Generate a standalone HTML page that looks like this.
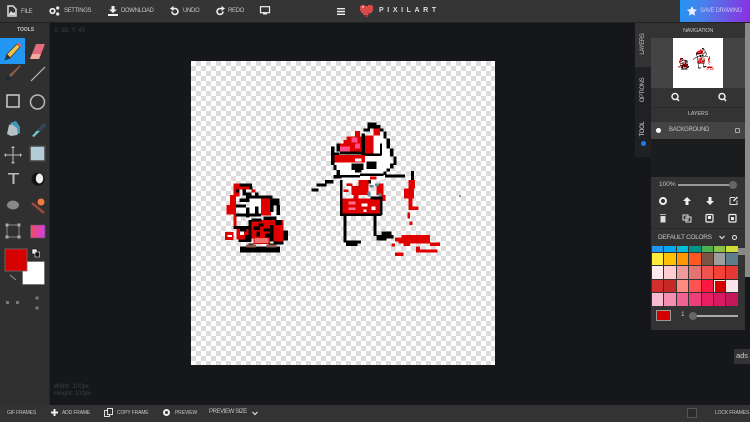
<!DOCTYPE html>
<html><head><meta charset="utf-8"><style>
html,body{margin:0;padding:0;width:750px;height:422px;overflow:hidden;background:#15171a}
body{position:relative;font-family:"Liberation Sans",sans-serif}
div{position:absolute;box-sizing:border-box}
.t{color:#c4c4c4;font-size:6px;line-height:8px;white-space:nowrap;text-transform:uppercase;letter-spacing:-.35px}
.b{font-size:5px;letter-spacing:-.15px}
svg{position:absolute;overflow:visible}
.c{background-color:#fff;background-image:conic-gradient(#dcdcdc 25%,#fff 0 50%,#dcdcdc 0 75%,#fff 0);background-size:10px 10px}
.p{width:12.4px;height:13.2px;border:.5px solid #333}
</style></head><body>
<div style="left:0;top:0;width:750px;height:23px;background:#353535;border-bottom:1px solid #222"></div>
<div style="left:0;top:23px;width:50px;height:382px;background:#303030;border-right:1px solid #252525"></div>
<div style="left:0;top:405px;width:750px;height:17px;background:#333"></div>

<!-- top -->
<svg style="left:7px;top:5px" width="10" height="12" viewBox="0 0 10 12"><path d="M1 1h5l3 3v7H1z" fill="none" stroke="#ddd" stroke-width="1.5"/><path d="M2 9l2-3 2 2 2-1v3H2z" fill="#ddd"/></svg>
<div class="t" style="left:21px;top:8px">File</div>
<svg style="left:49px;top:6px" width="11" height="10" viewBox="0 0 11 10"><circle cx="3.5" cy="5" r="2.3" fill="none" stroke="#eee" stroke-width="1.7"/><circle cx="8.7" cy="2" r="1.6" fill="#eee"/><circle cx="8.7" cy="8" r="1.6" fill="#eee"/></svg>
<div class="t" style="left:64px;top:7px">Settings</div>
<svg style="left:108px;top:6px" width="10" height="10" viewBox="0 0 10 10"><path d="M3.5 0h3v3.5H9L5 7 1 3.5h2.5zM0 8h10v2H0z" fill="#eee"/></svg>
<div class="t" style="left:121px;top:7px">Download</div>
<svg style="left:170px;top:6px" width="9" height="10" viewBox="0 0 9 10"><path d="M2 2.5h3a3 3 0 1 1-3 3" fill="none" stroke="#eee" stroke-width="1.6"/><path d="M3.5 0v5L0 2.5z" fill="#eee"/></svg>
<div class="t" style="left:183px;top:7px">Undo</div>
<svg style="left:216px;top:6px" width="9" height="10" viewBox="0 0 9 10"><path d="M7 2.5H4a3 3 0 1 0 3 3" fill="none" stroke="#eee" stroke-width="1.6"/><path d="M5.5 0v5L9 2.5z" fill="#eee"/></svg>
<div class="t" style="left:228px;top:7px">Redo</div>
<svg style="left:260px;top:6px" width="10" height="10" viewBox="0 0 10 10"><rect x=".5" y=".7" width="9" height="6" fill="none" stroke="#eee" stroke-width="1.2"/><rect x="3" y="7" width="4" height="1.5" fill="#eee"/></svg>
<svg style="left:337px;top:8px" width="8" height="7" viewBox="0 0 8 7"><path d="M0 0h8v1.4H0zM0 2.8h8v1.4H0zM0 5.600h8V7H0z" fill="#eee"/></svg>
<svg style="left:360px;top:5px" width="13" height="13" viewBox="0 0 13 13"><path d="M1 0h4v1h3V0h4v1h1v5h-1v2h-2v2H8v2H5v-2H3V8H1V6H0V1h1z" fill="#d94a4a"/><path d="M2 1h2v2H2z" fill="#f7a0a0"/><path d="M8 8h2v2H8zM5 10h3v2H5z" fill="#a92b2b"/></svg>
<div style="left:379px;top:6px;color:#ddd;font-size:7px;font-weight:bold;letter-spacing:3.6px;line-height:10px;white-space:nowrap">PIXILART</div>
<div style="left:680px;top:0;width:70px;height:22px;background:linear-gradient(100deg,#2196f3,#4b7ee8 35%,#8e2de2)"></div>
<svg style="left:687px;top:6px" width="10" height="10" viewBox="0 0 10 10"><path d="M5 0l1.500 3.300 3.500.4-2.600 2.400.7 3.600L5 8 1.900 9.700l.7-3.600L0 3.700l3.500-.4z" fill="#eef"/></svg>
<div class="t" style="left:700px;top:7px;color:#c9c4f5">Save Drawing</div>

<!-- coords -->
<div style="left:54px;top:27px;color:#3d3f42;font-size:6px;line-height:8px">X: 89, Y: 45</div>
<div style="left:54px;top:384px;color:#3d3f42;font-size:6px;line-height:7px">Width: 100px<br>Height: 100px</div>

<!-- left tools -->
<div class="t" style="left:17px;top:26px;font-size:5px;font-weight:bold;letter-spacing:0">Tools</div>
<div style="left:0;top:38px;width:25px;height:26px;background:#2196f3"></div>
<svg style="left:0;top:38px" width="50" height="290" viewBox="0 0 50 290">
<!-- pencil --><path d="M5 22l2-6L17 6l3 3L10 20z" fill="#f6c244" stroke="#222" stroke-width=".6"/><path d="M17 6l1.500-1.500 3 3L20 9z" fill="#e8655f"/><path d="M5 22l2-6 4 4z" fill="#333"/>
<!-- eraser --><path d="M30 21l6-15h9l-6 15z" fill="#e46a7c"/><path d="M30 21l2-5h9l-2 5z" fill="#f3a9a0"/>
<!-- brush --><path d="M9 37l11-10 1 1-10 11z" fill="#8a5a44"/><path d="M5 43c1-3 3-5 5-4s0 4-5 4z" fill="#1b2a38"/>
<path d="M31 43l14-14" stroke="#bbb" stroke-width="1.200"/>
<rect x="7" y="57" width="12" height="12" fill="none" stroke="#ccc" stroke-width="1.500"/>
<circle cx="37.500" cy="64" r="7" fill="none" stroke="#bbb" stroke-width="1.500"/>
<!-- bucket --><path d="M7 96l2-9 6-2 3 4 1 5-2 3-6 1z" fill="#b6c1c7"/><path d="M10 85l6-2 4 6 0 6-2 1-1-6z" fill="#3f97b8"/>
<!-- eyedropper --><path d="M32 98l10-11 2 2-10 10z" fill="#6ccbd3"/><path d="M37 93l5-7 3-1 1 3-5 5z" fill="#32475a"/>
<!-- move --><path d="M13 110v14M6 117h14" stroke="#bbb" stroke-width="1"/><path d="M13 108l-2 2h4zM13 126l-2-2h4zM4 117l2-2v4zM22 117l-2-2v4z" fill="#bbb"/>
<rect x="30" y="108" width="15" height="15" fill="#b3cdd6" stroke="#444" stroke-width="1.500"/>
<!-- text --><path d="M8 135h11v1.500h-4.500V146h-2v-9.500H8z" fill="#bbb"/>
<circle cx="38" cy="141" r="6.500" fill="#111"/><ellipse cx="39.500" cy="140.500" rx="3.700" ry="5" fill="#eee"/>
<!-- stamp blob --><ellipse cx="13" cy="167" rx="6" ry="4.500" fill="#888"/>
<path d="M32 165l12 10" stroke="#9a4a3c" stroke-width="2.500"/><circle cx="41" cy="164" r="3.500" fill="#f07b3f"/>
<!-- select --><rect x="7" y="187" width="12" height="12" fill="none" stroke="#888" stroke-width="1"/><g fill="#aaa"><rect x="5.500" y="185.500" width="3" height="3"/><rect x="17.500" y="185.500" width="3" height="3"/><rect x="5.500" y="197.500" width="3" height="3"/><rect x="17.500" y="197.500" width="3" height="3"/></g>
<defs><linearGradient id="g" x1="0" x2="1"><stop offset="0" stop-color="#ef4f5c"/><stop offset="1" stop-color="#d23ee8"/></linearGradient></defs>
<rect x="30.500" y="187" width="14.500" height="13" fill="url(#g)" stroke="#555" stroke-width=".6"/>
<!-- colors -->
<rect x="22.500" y="223.500" width="22" height="23" fill="#fff" stroke="#666" stroke-width=".6"/>
<rect x="5" y="211" width="22" height="22" fill="#d50000" stroke="#7a6a6a" stroke-width=".8"/>
<rect x="32" y="211" width="5" height="5" fill="#eee" stroke="#111" stroke-width=".6"/><rect x="35" y="214" width="4.500" height="5" fill="#111" stroke="#eee" stroke-width=".6"/>
<path d="M10 237l6 5" stroke="#999" stroke-width="1"/>
<g fill="#777"><rect x="6" y="263" width="3" height="3"/><rect x="16" y="263" width="3" height="3"/><rect x="35.500" y="258.500" width="3" height="3"/><rect x="35.500" y="268.500" width="3" height="3"/></g>
</svg>

<!-- canvas -->
<div class="c" style="left:191px;top:61px;width:304px;height:304px"></div>
<svg style="left:0;top:0" width="750" height="422" viewBox="0 0 750 422">
<defs><g id="art" shape-rendering="crispEdges">
<g transform="translate(220,170) scale(.33333)">
<g fill="#e00000"><rect x="40" y="40" width="18" height="40"/><rect x="30" y="75" width="18" height="58"/><rect x="20" y="105" width="18" height="28"/><rect x="58" y="49" width="30" height="9"/><rect x="95" y="58" width="12" height="10"/><rect x="123" y="86" width="30" height="50"/><rect x="40" y="132" width="10" height="45"/><rect x="15" y="186" width="25" height="24"/><rect x="50" y="176" width="35" height="32"/><rect x="90" y="150" width="100" height="30"/><rect x="95" y="180" width="60" height="25"/><rect x="160" y="180" width="30" height="35"/><rect x="100" y="204" width="50" height="18"/></g>
<g fill="#fff"><rect x="88" y="86" width="35" height="45"/><rect x="58" y="112" width="30" height="18"/><rect x="22" y="195" width="14" height="6"/><rect x="60" y="185" width="12" height="10"/></g>
<g fill="#f07070"><rect x="104" y="204" width="42" height="15"/></g>
<g fill="#000"><rect x="58" y="40" width="38" height="9"/><rect x="88" y="49" width="9" height="9"/><rect x="48" y="58" width="10" height="9"/><rect x="68" y="58" width="10" height="9"/><rect x="105" y="68" width="10" height="9"/><rect x="68" y="68" width="27" height="9"/><rect x="78" y="77" width="80" height="9"/><rect x="58" y="86" width="30" height="10"/><rect x="150" y="86" width="10" height="40"/><rect x="160" y="86" width="18" height="20"/><rect x="170" y="105" width="10" height="30"/><rect x="48" y="104" width="30" height="9"/><rect x="48" y="130" width="40" height="10"/><rect x="78" y="113" width="10" height="30"/><rect x="88" y="130" width="35" height="9"/><rect x="105" y="110" width="10" height="20"/><rect x="130" y="140" width="40" height="10"/><rect x="40" y="168" width="45" height="9"/><rect x="85" y="150" width="10" height="60"/><rect x="150" y="165" width="10" height="50"/><rect x="190" y="182" width="14" height="30"/><rect x="130" y="176" width="20" height="8"/><rect x="100" y="170" width="20" height="10"/><rect x="160" y="215" width="30" height="8"/><rect x="55" y="208" width="40" height="8"/><rect x="60" y="230" width="120" height="18"/><rect x="85" y="220" width="15" height="10"/><rect x="145" y="220" width="15" height="10"/><rect x="95" y="145" width="30" height="10"/><rect x="115" y="160" width="15" height="10"/><rect x="165" y="150" width="20" height="15"/><rect x="60" y="175" width="20" height="10"/><rect x="75" y="195" width="15" height="15"/><rect x="110" y="185" width="10" height="15"/><rect x="135" y="190" width="15" height="12"/></g>
<g fill="#8a5a50"><rect x="78" y="224" width="30" height="8"/><rect x="140" y="224" width="30" height="8"/></g>
</g>
<g transform="translate(305,115) scale(.33333)">
<path d="M88 142h82v-30h10v-50l50-20 35 110-20 40-60 8-60 2-30-20z" fill="#fff"/>
<g fill="#e00000"><rect x="105" y="85" width="65" height="25"/><rect x="115" y="75" width="55" height="10"/><rect x="125" y="65" width="45" height="10"/><rect x="150" y="48" width="15" height="20"/><rect x="88" y="120" width="92" height="22"/><rect x="180" y="62" width="25" height="53"/><rect x="205" y="40" width="20" height="22"/><rect x="195" y="185" width="20" height="8"/><rect x="125" y="205" width="18" height="8"/><rect x="140" y="215" width="25" height="25"/><rect x="215" y="205" width="20" height="35"/></g>
<g fill="#ff4f8b"><rect x="140" y="68" width="18" height="15"/><rect x="105" y="95" width="30" height="15"/><rect x="150" y="85" width="15" height="15"/></g>
<g fill="#fff"><rect x="150" y="130" width="20" height="10"/></g>
<g fill="#000"><rect x="188" y="22" width="27" height="18"/><rect x="215" y="30" width="12" height="10"/><rect x="225" y="40" width="10" height="10"/><rect x="235" y="50" width="10" height="20"/><rect x="245" y="70" width="10" height="30"/><rect x="255" y="100" width="10" height="25"/><rect x="265" y="125" width="10" height="25"/><rect x="255" y="145" width="10" height="15"/><rect x="245" y="160" width="10" height="10"/><rect x="235" y="170" width="10" height="10"/><rect x="175" y="40" width="20" height="10"/><rect x="170" y="55" width="10" height="65"/><rect x="180" y="115" width="50" height="8"/><rect x="105" y="110" width="65" height="8"/><rect x="95" y="85" width="10" height="25"/><rect x="78" y="95" width="10" height="55"/><rect x="88" y="112" width="15" height="8"/><rect x="140" y="145" width="35" height="20"/><rect x="185" y="140" width="30" height="22"/><rect x="150" y="165" width="20" height="8"/><rect x="85" y="150" width="10" height="15"/><rect x="95" y="165" width="10" height="15"/><rect x="105" y="180" width="60" height="8"/><rect x="165" y="175" width="70" height="8"/><rect x="225" y="85" width="6" height="35"/><rect x="240" y="178" width="60" height="9"/><rect x="20" y="220" width="20" height="10"/><rect x="35" y="205" width="30" height="10"/><rect x="60" y="195" width="25" height="10"/><rect x="85" y="180" width="25" height="10"/></g>
</g>
<g transform="translate(330,180) scale(.33333)">
<g fill="#e00000"><rect x="85" y="0" width="30" height="45"/><rect x="50" y="10" width="15" height="8"/><rect x="65" y="18" width="20" height="9"/><rect x="40" y="28" width="15" height="8"/><rect x="38" y="55" width="112" height="45"/><rect x="70" y="45" width="15" height="10"/><rect x="155" y="45" width="12" height="18"/><rect x="235" y="0" width="20" height="25"/><rect x="222" y="25" width="30" height="30"/><rect x="235" y="55" width="12" height="35"/><rect x="248" y="80" width="18" height="10"/><rect x="232" y="98" width="8" height="18"/><rect x="238" y="125" width="10" height="10"/><rect x="195" y="172" width="105" height="12"/><rect x="215" y="165" width="85" height="8"/><rect x="205" y="182" width="95" height="8"/><rect x="220" y="190" width="20" height="8"/><rect x="300" y="188" width="30" height="10"/><rect x="258" y="200" width="12" height="18"/><rect x="258" y="208" width="65" height="10"/><rect x="195" y="218" width="25" height="10"/><rect x="185" y="190" width="10" height="10"/></g>
<g fill="#ff6f91"><rect x="55" y="65" width="22" height="8"/><rect x="55" y="82" width="22" height="8"/></g>
<g fill="#fff"><rect x="95" y="70" width="18" height="10"/><rect x="100" y="88" width="10" height="8"/><rect x="125" y="80" width="12" height="10"/><rect x="60" y="45" width="10" height="8"/></g>
<g fill="#5f8b9b"><rect x="118" y="15" width="12" height="8"/><rect x="135" y="10" width="12" height="8"/><rect x="112" y="35" width="10" height="14"/><rect x="145" y="40" width="10" height="10"/></g>
<g fill="#000"><rect x="0" y="0" width="8" height="10"/><rect x="30" y="0" width="8" height="105"/><rect x="30" y="100" width="125" height="8"/><rect x="150" y="50" width="8" height="55"/><rect x="115" y="0" width="8" height="10"/><rect x="122" y="50" width="30" height="8"/><rect x="40" y="108" width="9" height="80"/><rect x="48" y="182" width="45" height="8"/><rect x="48" y="190" width="35" height="8"/><rect x="130" y="108" width="9" height="60"/><rect x="140" y="165" width="50" height="10"/><rect x="155" y="155" width="30" height="10"/><rect x="140" y="172" width="30" height="10"/></g>
</g>
<rect x="411" y="171" width="3" height="9" fill="#000"/>
</g></defs>
<use href="#art"/>
<rect x="459" y="195" width="2" height="2" fill="#999"/>
</svg>

<!-- right panel -->
<div style="left:635px;top:23px;width:16px;height:134px;background:#1f2125"></div>
<div style="left:635px;top:23px;width:16px;height:44px;background:#333"></div>
<div class="t" style="left:622px;top:40px;width:42px;text-align:center;transform:rotate(-90deg)">Layers</div>
<div class="t" style="left:622px;top:86px;width:42px;text-align:center;transform:rotate(-90deg)">Options</div>
<div class="t" style="left:622px;top:125px;width:42px;text-align:center;transform:rotate(-90deg);color:#ddd">Tool</div>
<div style="left:641px;top:141px;width:5px;height:5px;border-radius:50%;background:#1e7be8"></div>
<div style="left:651px;top:23px;width:94px;height:307px;background:#333"></div>
<div style="left:745px;top:23px;width:5px;height:254px;background:#8a8a8a"></div>
<div class="t" style="left:651px;top:27px;width:94px;text-align:center;font-size:5.500px;letter-spacing:-.3px">Navigation</div>
<div style="left:651px;top:38px;width:94px;height:50px;background:#444"></div>
<div style="left:673px;top:38px;width:50px;height:50px;background:#fff"></div>
<svg style="left:673px;top:38px" width="50" height="50" viewBox="191 61 304 304"><use href="#art"/></svg>
<svg style="left:670px;top:92px" width="60" height="10" viewBox="0 0 60 10"><g fill="none" stroke="#eee" stroke-width="1.500"><circle cx="5" cy="4.500" r="3"/><path d="M7.300 7L9 9"/><circle cx="52" cy="4.500" r="3"/><path d="M54.300 7L56 9"/></g></svg>
<div style="left:651px;top:107px;width:94px;height:1px;background:#2a2a2a"></div>
<div class="t" style="left:651px;top:110px;width:94px;text-align:center;font-size:5.500px;letter-spacing:-.2px">Layers</div>
<div style="left:651px;top:122px;width:94px;height:17px;background:#444"></div>
<div style="left:656px;top:128px;width:5px;height:5px;border-radius:50%;background:#fff"></div>
<div class="t" style="left:669px;top:126px;font-size:6px;letter-spacing:-.3px">Background</div>
<div style="left:735px;top:128px;width:5px;height:5px;border:1px solid #aaa;border-radius:1px"></div>
<div style="left:651px;top:139px;width:94px;height:38px;background:#1b1c1e"></div>
<div class="t" style="left:659px;top:181px;font-size:6.500px;letter-spacing:0">100%</div>
<div style="left:678px;top:184px;width:56px;height:2px;background:#999"></div>
<div style="left:729px;top:181px;width:8px;height:8px;border-radius:50%;background:#666"></div>
<svg style="left:651px;top:190px" width="94" height="56" viewBox="0 0 94 56">
<circle cx="12" cy="11" r="3" fill="none" stroke="#eee" stroke-width="2"/>
<path d="M36 7l-4 4h2.500v4h3v-4H40z" fill="#eee"/><path d="M59 15l4-4h-2.500V7h-3v4H55z" fill="#eee"/>
<path d="M79 7.500h5M79 7.500v7h7v-4" fill="none" stroke="#ddd" stroke-width="1"/><path d="M82 10.500l4-4 1 1-4 4z" fill="#eee"/>
<g transform="translate(0,-4)">
<path d="M9.500 30h5v6.500h-5zM9 29h6v-.8H9z" fill="#ddd"/>
<rect x="32" y="29" width="5" height="5" fill="none" stroke="#ddd" stroke-width="1"/><rect x="35" y="31" width="5" height="5" fill="none" stroke="#ddd" stroke-width="1"/>
<rect x="55" y="28.500" width="7" height="7.500" rx="1" fill="none" stroke="#eee" stroke-width="1.200"/><rect x="57" y="30" width="3" height="3" fill="#eee"/>
<rect x="78" y="28.500" width="7" height="7.500" rx="1" fill="none" stroke="#eee" stroke-width="1.200"/><rect x="80" y="31" width="3" height="3" fill="#eee"/>
</g>
</svg>
<div style="left:651px;top:228px;width:94px;height:1px;background:#2a2a2a"></div>
<div style="left:658px;top:233px;color:#c4c4c4;font-size:6.500px;letter-spacing:-.3px;line-height:9px;white-space:nowrap">DEFAULT COLORS</div>
<svg style="left:719px;top:235px" width="6" height="5" viewBox="0 0 6 5"><path d="M.5 1l2.500 2.500L5.500 1" fill="none" stroke="#ddd" stroke-width="1.200"/></svg>
<div style="left:732px;top:235px;width:5px;height:5px;border-radius:50%;border:1.500px solid #eee"></div>
<div style="left:738px;top:248px;width:7px;height:7px;background:#888"></div>

<div style="left:651px;top:246px;width:87px;height:60px;overflow:hidden">
<div style="left:0;top:-7px;width:87px;display:grid;grid-template-columns:repeat(7,12.4px);grid-auto-rows:13.2px">
<span class="p" style="background:#2196f3"></span><span class="p" style="background:#03a9f4"></span><span class="p" style="background:#00bcd4"></span><span class="p" style="background:#009688"></span><span class="p" style="background:#4caf50"></span><span class="p" style="background:#8bc34a"></span><span class="p" style="background:#cddc39"></span>
<span class="p" style="background:#ffeb3b"></span><span class="p" style="background:#ffc107"></span><span class="p" style="background:#ff9800"></span><span class="p" style="background:#ff5722"></span><span class="p" style="background:#795548"></span><span class="p" style="background:#9e9e9e"></span><span class="p" style="background:#607d8b"></span>
<span class="p" style="background:#ffebee"></span><span class="p" style="background:#ffcdd2"></span><span class="p" style="background:#ef9a9a"></span><span class="p" style="background:#e57373"></span><span class="p" style="background:#ef5350"></span><span class="p" style="background:#f44336"></span><span class="p" style="background:#e53935"></span>
<span class="p" style="background:#d32f2f"></span><span class="p" style="background:#c62828"></span><span class="p" style="background:#ff8a80"></span><span class="p" style="background:#ff5252"></span><span class="p" style="background:#ff1744"></span><span class="p" style="background:#d50000;border:2px solid #eee;outline:1px solid #111;outline-offset:-1px"></span><span class="p" style="background:#fce4ec"></span>
<span class="p" style="background:#f8bbd0"></span><span class="p" style="background:#f48fb1"></span><span class="p" style="background:#f06292"></span><span class="p" style="background:#ec407a"></span><span class="p" style="background:#e91e63"></span><span class="p" style="background:#d81b60"></span><span class="p" style="background:#c2185b"></span>
</div></div>
<div style="left:656px;top:310px;width:15px;height:11px;background:#d50000;border:1px solid #999"></div>
<div class="t" style="left:681px;top:311px;font-size:6.500px">1</div>
<div style="left:694px;top:315px;width:44px;height:2px;background:#aaa"></div>
<div style="left:689px;top:312px;width:8px;height:8px;border-radius:50%;background:#666"></div>
<div style="left:734px;top:349px;width:16px;height:15px;background:#333;color:#ccc;font-size:7.500px;line-height:14px;text-align:center">ads</div>

<!-- bottom -->
<div class="t b" style="left:7px;top:409px">GIF Frames</div>
<svg style="left:51px;top:409px" width="7" height="7" viewBox="0 0 7 7"><path d="M2.500 0h2v2.500H7v2H4.500V7h-2V4.500H0v-2h2.500z" fill="#eee"/></svg>
<div class="t b" style="left:62px;top:409px">Add Frame</div>
<svg style="left:104px;top:408px" width="9" height="9" viewBox="0 0 9 9"><rect x=".5" y="2.500" width="5" height="6" fill="none" stroke="#ddd"/><rect x="3.500" y=".5" width="5" height="6" fill="#333" stroke="#ddd"/></svg>
<div class="t b" style="left:117px;top:409px">Copy Frame</div>
<div style="left:163px;top:409px;width:7px;height:7px;border-radius:50%;border:2px solid #eee;background:#333"></div>
<div class="t b" style="left:175px;top:409px">Preview</div>
<div class="t" style="left:209px;top:408px;letter-spacing:-.4px">Preview Size</div>
<svg style="left:252px;top:411px" width="6" height="5" viewBox="0 0 6 5"><path d="M.5 1l2.500 2.500L5.500 1" fill="none" stroke="#ddd" stroke-width="1.200"/></svg>
<div style="left:687px;top:408px;width:10px;height:10px;background:#2c2c2c;border:1px solid #555"></div>
<div class="t b" style="left:715px;top:409px">Lock Frames</div>
</body></html>
